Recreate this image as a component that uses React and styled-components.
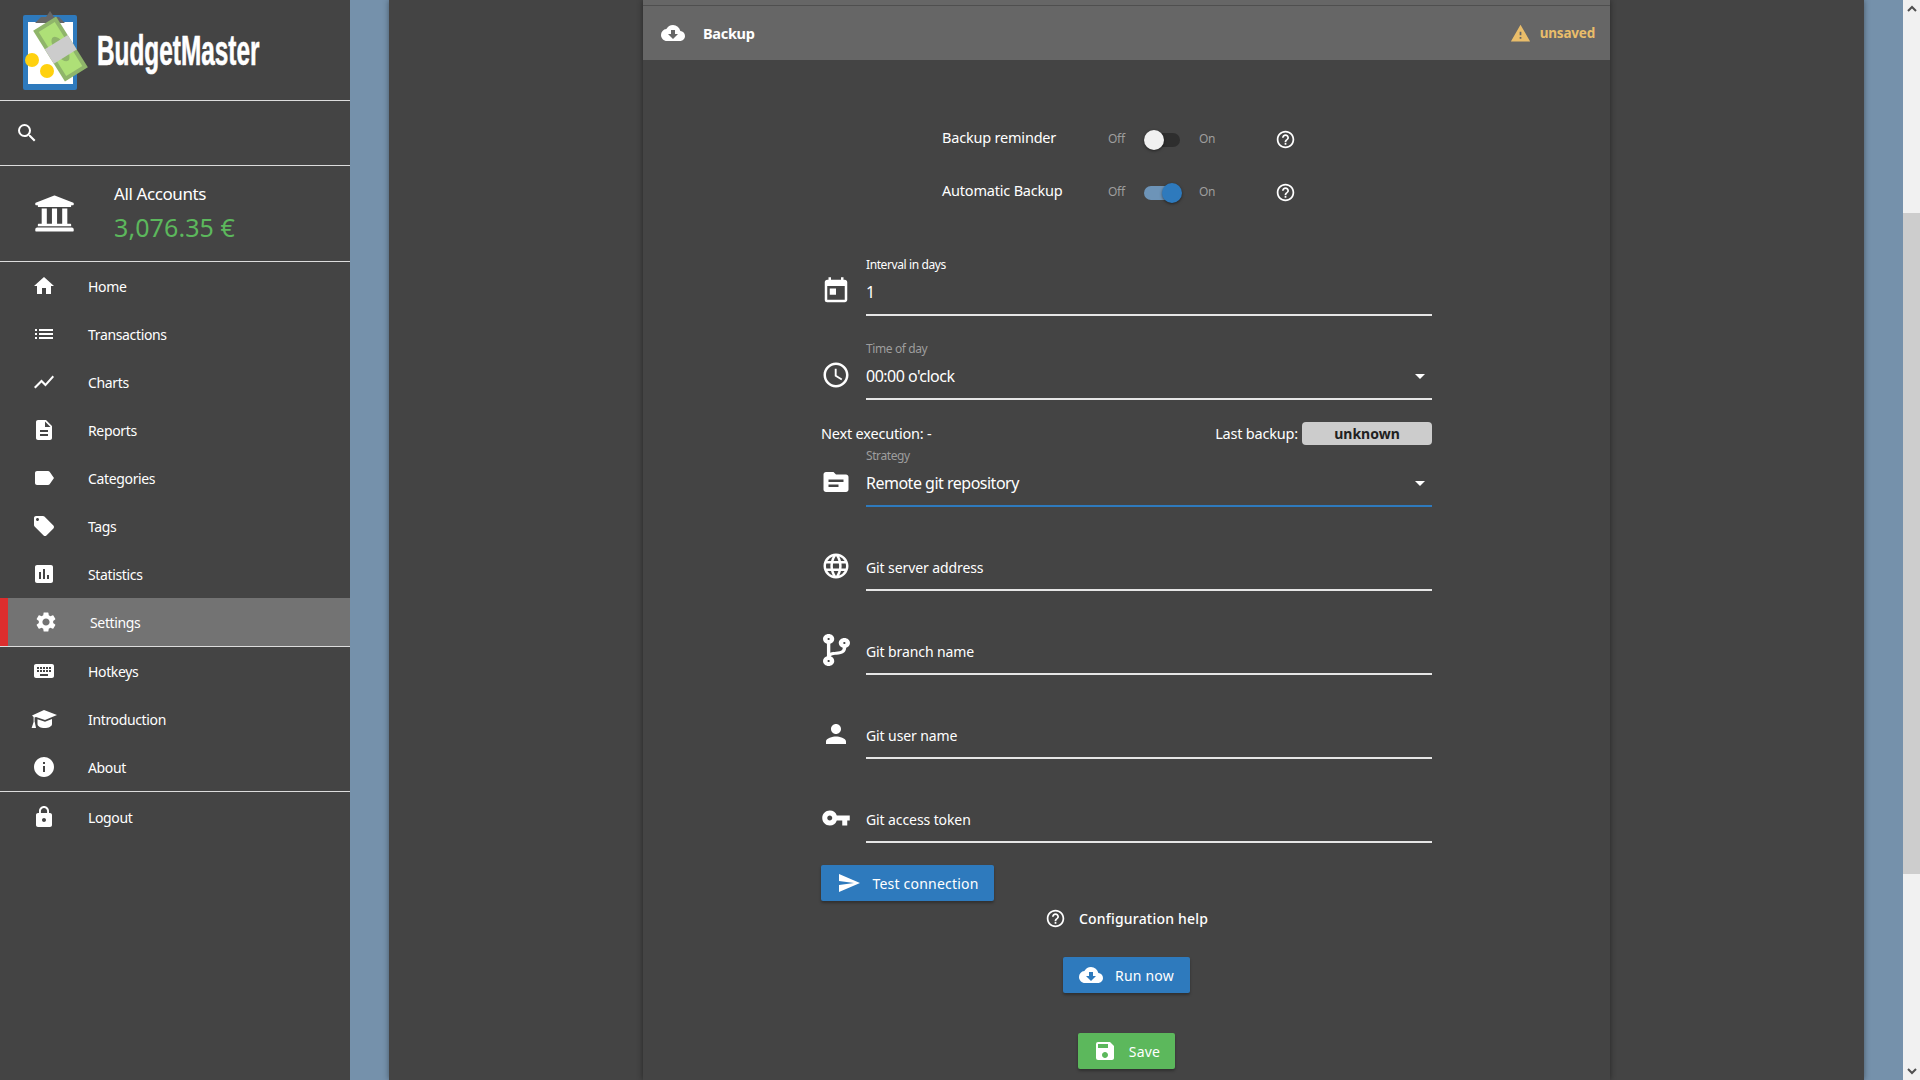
import React from "react";
import styled, { createGlobalStyle } from "styled-components";
import {
  MdSearch,
  MdHome,
  MdList,
  MdShowChart,
  MdDescription,
  MdLabel,
  MdLocalOffer,
  MdAssessment,
  MdSettings,
  MdKeyboard,
  MdInfo,
  MdLock,
  MdCloudDownload,
  MdWarning,
  MdHelpOutline,
  MdToday,
  MdAccessTime,
  MdTopic,
  MdLanguage,
  MdPerson,
  MdVpnKey,
  MdSend,
  MdSave,
  MdArrowDropDown,
} from "react-icons/md";
import { FaCodeBranch, FaUniversity } from "react-icons/fa";

const FONT = '"Noto Sans", "Open Sans", sans-serif';

const GlobalStyle = createGlobalStyle`
  html, body {
    margin: 0;
    height: 100%;
    overflow: hidden;
    background: #444;
  }
  body {
    font-family: ${FONT};
    color: #fff;
  }
`;

const Page = styled.div`
  display: flex;
  height: 1080px;
  width: 1920px;
`;

/* sidebar */
const Sidebar = styled.aside`
  width: 350px;
  flex-shrink: 0;
  background: #444;
  display: flex;
  flex-direction: column;
`;

const LogoBlock = styled.div`
  height: 100px;
  display: flex;
  align-items: flex-start;
  padding-left: 20px;
  border-bottom: 1px solid #ddd;
`;

const LogoText = styled.span`
  display: inline-block;
  font-family: "Liberation Sans", sans-serif;
  font-weight: 700;
  font-size: 42px;
  line-height: 102px;
  margin-left: 2px;
  -webkit-text-stroke: 0.6px #fff;
  transform: scaleX(0.58);
  transform-origin: left center;
  white-space: nowrap;
`;

const SearchBlock = styled.div`
  height: 64px;
  display: flex;
  align-items: center;
  padding-left: 15px;
  border-bottom: 1px solid #ddd;
  font-size: 24px;
`;

const AccountBlock = styled.div`
  height: 95px;
  display: flex;
  align-items: center;
  padding-left: 34px;
  border-bottom: 1px solid #ddd;
  font-size: 41px;
`;

const AccountText = styled.div`
  margin-left: 39px;
  display: flex;
  flex-direction: column;
`;

const AccountName = styled.span`
  font-size: 17px;
  letter-spacing: -0.4px;
  line-height: 22px;
  padding-bottom: 4px;
`;

const Balance = styled.span`
  font-size: 25px;
  line-height: 36px;
  letter-spacing: 0.1px;
  color: #5cb85c;
`;

const NavList = styled.nav`
  display: flex;
  flex-direction: column;
`;

const NavItem = styled.div`
  height: 48px;
  display: flex;
  align-items: center;
  padding-left: ${(p) => (p.$active ? "26px" : "32px")};
  border-left: ${(p) => (p.$active ? "8px solid #dc2e2e" : "none")};
  background: ${(p) => (p.$active ? "#737373" : "transparent")};
  font-size: 14px;
  letter-spacing: -0.35px;
`;

const NavIcon = styled.span`
  width: 24px;
  height: 24px;
  font-size: 24px;
  display: flex;
  align-items: center;
  justify-content: center;
  margin-right: 32px;
`;

const NavDivider = styled.div`
  height: 1px;
  background: #ddd;
  margin-bottom: ${(p) => p.$after || "0"};
`;

/* main area */
const Main = styled.main`
  flex: 1;
  background: #7591ab;
  padding: 0 39px;
  display: flex;
  min-width: 0;
`;

const Panel = styled.div`
  flex: 1;
  background: #444;
  box-shadow: 0 0 6px rgba(0, 0, 0, 0.4);
  display: flex;
  justify-content: center;
`;

const Card = styled.section`
  width: 967px;
  background: #444;
  box-shadow: 0 0 6px rgba(0, 0, 0, 0.45);
`;

const TopSliver = styled.div`
  height: 5px;
  background: #666;
  border-bottom: 1px solid #4f4f4f;
`;

const CardHeader = styled.header`
  height: 54px;
  background: #666;
  display: flex;
  align-items: center;
  padding: 0 15px 0 18px;
  font-size: 24px;
`;

const CardTitle = styled.span`
  margin-left: 18px;
  font-size: 14.5px;
  font-weight: 700;
  letter-spacing: -0.3px;
  flex: 1;
`;

const Unsaved = styled.span`
  display: flex;
  align-items: center;
  gap: 9px;
  color: #e9bd6a;
  font-size: 13.5px;
  font-weight: 700;
  letter-spacing: -0.2px;
`;

const Form = styled.div`
  width: 611px;
  margin: 0 auto;
  padding-top: 53px;
  display: flex;
  flex-direction: column;
  font-size: 14.5px;
`;

const SwitchRow = styled.div`
  height: 53px;
  display: flex;
  align-items: center;
  padding-left: 121px;
`;

const SwitchLabel = styled.span`
  width: 166px;
  letter-spacing: -0.2px;
  padding-bottom: 5px;
`;

const SwitchHint = styled.span`
  font-size: 12px;
  color: #9e9e9e;
  letter-spacing: -0.3px;
  padding-bottom: 2px;
  width: ${(p) => p.$w};
`;

const Track = styled.div`
  width: 36px;
  height: 14px;
  border-radius: 7px;
  background: ${(p) => (p.$on ? "#6d94b8" : "#2e2e2e")};
  position: relative;
  margin-right: 19px;
`;

const Knob = styled.div`
  position: absolute;
  top: -3px;
  left: ${(p) => (p.$on ? "18px" : "0")};
  width: 20px;
  height: 20px;
  border-radius: 50%;
  background: ${(p) => (p.$on ? "#2e7abd" : "#f1f1f1")};
  box-shadow: 0 1px 3px rgba(0, 0, 0, 0.5);
`;

const HelpSlot = styled.span`
  margin-left: ${(p) => p.$left || "0"};
  font-size: 21px;
  display: flex;
`;

const FieldRow = styled.div`
  height: ${(p) => (p.$tight ? "63px" : "84px")};
  margin-top: ${(p) => p.$top || "0"};
  display: flex;
  align-items: flex-end;
`;

const FieldIcon = styled.span`
  width: 30px;
  height: 30px;
  font-size: 30px;
  display: flex;
  align-items: center;
  justify-content: center;
  margin: 0 15px 10px 0;
  flex-shrink: 0;
`;

const Field = styled.div`
  flex: 1;
  height: 63px;
  border-bottom: 2px solid ${(p) => (p.$focus ? "#2e7abd" : "#e6e6e6")};
  box-sizing: border-box;
`;

const FieldLabel = styled.div`
  height: 23px;
  padding-top: 1px;
  box-sizing: border-box;
  line-height: 22px;
  font-size: 12px;
  letter-spacing: -0.4px;
  color: ${(p) => (p.$muted ? "#9e9e9e" : "#fff")};
`;

const FieldValue = styled.div`
  height: 38px;
  padding-bottom: 6px;
  box-sizing: border-box;
  display: flex;
  align-items: center;
  justify-content: space-between;
  font-size: ${(p) => (p.$placeholder ? "14px" : "16px")};
  letter-spacing: ${(p) => (p.$placeholder ? "-0.1px" : "-0.5px")};
  color: #fff;
`;

const CaretWrap = styled.span`
  font-size: 24px;
  display: flex;
`;

const InfoRow = styled.div`
  height: 45px;
  display: flex;
  align-items: flex-end;
  justify-content: space-between;
  letter-spacing: -0.2px;
`;

const InfoText = styled.span`
  height: 23px;
  line-height: 23px;
`;

const LastBackup = styled.div`
  display: flex;
  align-items: center;
  gap: 4px;
`;

const Pill = styled.span`
  width: 130px;
  height: 23px;
  line-height: 23px;
  text-align: center;
  border-radius: 4px;
  background: #ccc;
  color: #212121;
  font-size: 14px;
  font-weight: 700;
  letter-spacing: 0;
`;

const Button = styled.button`
  height: 36px;
  width: ${(p) => p.$w};
  margin-top: ${(p) => p.$top || "0"};
  align-self: ${(p) => p.$align || "center"};
  border: none;
  border-radius: 2px;
  background: ${(p) => p.$bg || "#2e7abd"};
  color: #fff;
  font-family: ${FONT};
  font-size: 14px;
  letter-spacing: 0.2px;
  display: flex;
  align-items: center;
  justify-content: center;
  gap: 12px;
  padding: 0;
  box-shadow: 0 2px 3px rgba(0, 0, 0, 0.3);
  svg {
    font-size: 24px;
  }
`;

const HelpRow = styled.div`
  height: 36px;
  padding-bottom: 1px;
  box-sizing: border-box;
  display: flex;
  align-items: center;
  justify-content: center;
  gap: 13px;
  font-size: 14px;
  letter-spacing: 0.2px;
  font-weight: 500;
`;

/* scrollbar */
const Scrollbar = styled.div`
  width: 17px;
  flex-shrink: 0;
  background: #f1f1f1;
  display: flex;
  flex-direction: column;
`;

const ScrollArrow = styled.div`
  height: 17px;
  display: flex;
  align-items: center;
  justify-content: center;
  margin-top: ${(p) => (p.$end ? "auto" : "0")};
`;

const ScrollThumb = styled.div`
  height: 661px;
  margin-top: 196px;
  background: #cdcdcd;
`;

const Logo = () => (
  <svg width="75" height="90" viewBox="0 0 75 90" style={{ flexShrink: 0, overflow: "visible" }}>
    <g transform="translate(-20 0)">
      <rect x="23" y="15" width="54" height="75" rx="2" fill="#2e7abd" />
      <rect x="28" y="22" width="45" height="62" fill="#fff" />
      <path d="M35 23 l6-6 h5 l4-6 l4 6 h5 l6 6z" fill="#666" />
      <circle cx="32" cy="60" r="7" fill="#ffd10f" />
      <circle cx="47" cy="71" r="7" fill="#ffd10f" />
      <g transform="rotate(-32 60.5 49)">
        <rect x="47" y="19" width="27" height="60" fill="#8fb56a" />
        <rect x="51" y="23" width="19" height="52" fill="#aee077" />
        <ellipse cx="60.5" cy="49" rx="6" ry="14" fill="#8fb56a" />
        <rect x="47" y="41" width="27" height="17" fill="#ccc" />
      </g>
    </g>
  </svg>
);

// mortarboard, the icon package's one is too flat for the reference
const GraduationCap = () => (
  <svg width="26" height="20" viewBox="0 0 26 20" style={{ flexShrink: 0 }} fill="#fff">
    <path d="M1 6.5 L13 1 L26 6 L14 11 L5 8 L3.6 8.6 V13 H2.6 V8 Z" />
    <path d="M6.5 10.2 L14 12.8 L21 10 V15 C21 17.5 17.5 19 13.6 19 C9.8 19 6.5 17.5 6.5 15 Z" />
    <path d="M2.6 13 H3.8 L5 19 H0.6 Z" />
  </svg>
);

const navTop = [
  ["Home", MdHome],
  ["Transactions", MdList],
  ["Charts", MdShowChart],
  ["Reports", MdDescription],
  ["Categories", MdLabel],
  ["Tags", MdLocalOffer],
  ["Statistics", MdAssessment],
  ["Settings", MdSettings, true],
];

const navMiddle = [
  ["Hotkeys", MdKeyboard],
  ["Introduction", GraduationCap],
  ["About", MdInfo],
];

const Switch = ({ label, on }) => (
  <SwitchRow>
    <SwitchLabel>{label}</SwitchLabel>
    <SwitchHint $w="36px">Off</SwitchHint>
    <Track $on={on}>
      <Knob $on={on} />
    </Track>
    <SwitchHint $w="16px">On</SwitchHint>
    <HelpSlot $left="60px">
      <MdHelpOutline />
    </HelpSlot>
  </SwitchRow>
);

const gitFields = [
  ["Git server address", <MdLanguage key="a" />],
  ["Git branch name", <FaCodeBranch key="b" style={{ width: 27, height: 32 }} preserveAspectRatio="none" />],
  ["Git user name", <MdPerson key="c" />],
  ["Git access token", <MdVpnKey key="d" />],
];

export default function App() {
  return (
    <>
      <GlobalStyle />
      <Page>
        <Sidebar>
          <LogoBlock>
            <Logo />
            <LogoText>BudgetMaster</LogoText>
          </LogoBlock>
          <SearchBlock>
            <MdSearch />
          </SearchBlock>
          <AccountBlock>
            <FaUniversity />
            <AccountText>
              <AccountName>All Accounts</AccountName>
              <Balance>3,076.35 €</Balance>
            </AccountText>
          </AccountBlock>
          <NavList>
            {navTop.map(([name, Icon, active]) => (
              <NavItem key={name} $active={active}>
                <NavIcon>
                  <Icon />
                </NavIcon>
                {name}
              </NavItem>
            ))}
            <NavDivider />
            {navMiddle.map(([name, Icon]) => (
              <NavItem key={name}>
                <NavIcon>
                  <Icon />
                </NavIcon>
                {name}
              </NavItem>
            ))}
            <NavDivider $after="1px" />
            <NavItem>
              <NavIcon>
                <MdLock />
              </NavIcon>
              Logout
            </NavItem>
          </NavList>
        </Sidebar>
        <Main>
          <Panel>
            <Card>
              <TopSliver />
              <CardHeader>
                <MdCloudDownload />
                <CardTitle>Backup</CardTitle>
                <Unsaved>
                  <MdWarning size={21} />
                  unsaved
                </Unsaved>
              </CardHeader>
              <Form>
                <Switch label="Backup reminder" />
                <Switch label="Automatic Backup" on />
                <FieldRow $top="13px">
                  <FieldIcon>
                    <MdToday />
                  </FieldIcon>
                  <Field>
                    <FieldLabel>Interval in days</FieldLabel>
                    <FieldValue>1</FieldValue>
                  </Field>
                </FieldRow>
                <FieldRow>
                  <FieldIcon>
                    <MdAccessTime />
                  </FieldIcon>
                  <Field>
                    <FieldLabel $muted>Time of day</FieldLabel>
                    <FieldValue>
                      00:00 o'clock
                      <CaretWrap>
                        <MdArrowDropDown />
                      </CaretWrap>
                    </FieldValue>
                  </Field>
                </FieldRow>
                <InfoRow>
                  <InfoText>Next execution: -</InfoText>
                  <LastBackup>
                    <InfoText>Last backup:</InfoText>
                    <Pill>unknown</Pill>
                  </LastBackup>
                </InfoRow>
                <FieldRow $tight $top="-1px">
                  <FieldIcon>
                    <MdTopic />
                  </FieldIcon>
                  <Field $focus>
                    <FieldLabel $muted>Strategy</FieldLabel>
                    <FieldValue>
                      Remote git repository
                      <CaretWrap>
                        <MdArrowDropDown />
                      </CaretWrap>
                    </FieldValue>
                  </Field>
                </FieldRow>
                {gitFields.map(([name, icon]) => (
                  <FieldRow key={name}>
                    <FieldIcon>{icon}</FieldIcon>
                    <Field>
                      <FieldLabel />
                      <FieldValue $placeholder>{name}</FieldValue>
                    </Field>
                  </FieldRow>
                ))}
                <Button $w="173px" $top="22px" $align="flex-start">
                  <MdSend />
                  Test connection
                </Button>
                <HelpRow>
                  <MdHelpOutline size={21} />
                  Configuration help
                </HelpRow>
                <Button $w="127px" $top="20px">
                  <MdCloudDownload />
                  Run now
                </Button>
                <Button $w="97px" $top="40px" $bg="#5cb85c">
                  <MdSave />
                  Save
                </Button>
              </Form>
            </Card>
          </Panel>
        </Main>
        <Scrollbar>
          <ScrollArrow>
            <svg width="10" height="7" viewBox="0 0 10 7">
              <path d="M1 6 L5 2 L9 6" fill="none" stroke="#505050" strokeWidth="2" />
            </svg>
          </ScrollArrow>
          <ScrollThumb />
          <ScrollArrow $end>
            <svg width="10" height="7" viewBox="0 0 10 7">
              <path d="M1 1 L5 5 L9 1" fill="none" stroke="#505050" strokeWidth="2" />
            </svg>
          </ScrollArrow>
        </Scrollbar>
      </Page>
    </>
  );
}
